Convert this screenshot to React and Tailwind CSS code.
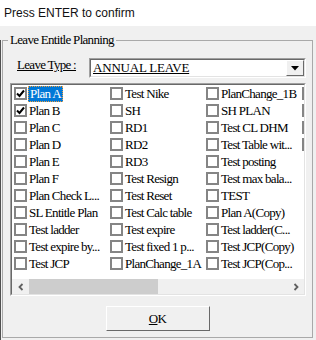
import React from "react";

const columns = [
  ["Plan A", "Plan B", "Plan C", "Plan D", "Plan E", "Plan F", "Plan Check L...", "SL Entitle Plan", "Test ladder", "Test expire by...", "Test JCP"],
  ["Test Nike", "SH", "RD1", "RD2", "RD3", "Test Resign", "Test Reset", "Test Calc table", "Test expire", "Test fixed 1 p...", "PlanChange_1A"],
  ["PlanChange_1B", "SH PLAN", "Test CL DHM", "Test Table wit...", "Test posting", "Test max bala...", "TEST", "Plan A(Copy)", "Test ladder(C...", "Test JCP(Copy)", "Test JCP(Cop..."],
  // fourth column only peeks in at the right edge
  ["", "", "", ""],
];

const checked = ["Plan A", "Plan B"];

function CheckBox({ on }) {
  return (
    <div className="w-[13px] h-[13px] shrink-0 border-2 border-[#858585] bg-white flex items-center justify-center">
      {on && (
        <svg width="9" height="9" viewBox="0 0 9 9">
          <path d="M1 4.5 L3.5 7 L8 1.5" fill="none" stroke="#000" strokeWidth="2" />
        </svg>
      )}
    </div>
  );
}

function Item({ label, col, row }) {
  const selected = col === 0 && row === 0;
  return (
    <div className="flex items-center h-[17px] w-[96px] gap-[2px]">
      <CheckBox on={checked.includes(label)} />
      {selected ? (
        <span className="h-[16px] leading-[14px] px-[1px] -ml-[1px] bg-[#0078d7] text-white border border-dotted border-[#f0a040] whitespace-nowrap">
          {label}
        </span>
      ) : (
        label && <span className="whitespace-nowrap leading-[16px]">{label}</span>
      )}
    </div>
  );
}

function Chevron({ dir }) {
  return (
    <svg width="8" height="8" viewBox="0 0 8 8">
      <path
        d={dir === "left" ? "M5.5 1 L2.5 4 L5.5 7" : "M2.5 1 L5.5 4 L2.5 7"}
        fill="none"
        stroke="#606060"
        strokeWidth="1.8"
      />
    </svg>
  );
}

export default function App() {
  return (
    <div className="w-[316px] h-[340px] overflow-hidden bg-[#f0f0f0] text-black font-['Liberation_Serif',serif] text-[13px] tracking-[-0.7px]">
      {/* title strip */}
      <div className="h-[26px] bg-white pl-[4px] flex items-center font-['Liberation_Sans',Arial,sans-serif] text-[12px] tracking-normal text-[#111]">
        Press ENTER to confirm
      </div>

      <div className="flex pt-[7px]">
        <div className="w-[2px] mt-[7px] h-[300px] border-l border-[#505050]" />

        <fieldset className="w-[311px] h-[305px] border border-[#a9a9a9] flex flex-col">
          <legend className="ml-[5px] px-[2px] leading-[14px]">Leave Entitle Planning</legend>

          {/* leave type row */}
          <div className="flex items-center mt-[11px]">
            <span className="ml-[14px] w-[72px] underline leading-[14px] -mt-[6px]">Leave Type :</span>
            <div className="w-[217px] h-[20px] border-t border-l border-[#a0a0a0] border-b-white border-r-white border-b border-r">
              <div className="h-full border-t border-l border-[#696969] border-b border-r border-b-[#e3e3e3] border-r-[#e3e3e3] bg-white flex items-center">
                <span className="flex-1 pl-[2px] underline tracking-[-0.2px] leading-[16px]">ANNUAL LEAVE</span>
                <div className="w-[18px] h-full bg-[#f0f0f0] border-t border-l border-white border-b border-r border-b-[#696969] border-r-[#696969] flex items-center justify-center">
                  <svg width="8" height="5" viewBox="0 0 8 5">
                    <path d="M0 0 L8 0 L4 4.5 Z" fill="#000" />
                  </svg>
                </div>
              </div>
            </div>
          </div>

          {/* list box */}
          <div className="ml-[7px] mt-[5px] w-[296px] h-[213px] border-t border-l border-[#a0a0a0] border-b border-r border-b-white border-r-white">
            <div className="h-full border-t border-l border-[#696969] border-b border-r border-b-[#e3e3e3] border-r-[#e3e3e3] bg-white flex flex-col">
              <div className="flex-1 overflow-hidden pl-[2px] grid grid-flow-col grid-rows-[repeat(11,17px)] auto-cols-[96px]">
                {columns.map((col, c) =>
                  col.map((label, r) => <Item key={c + "-" + r} label={label} col={c} row={r} />)
                )}
              </div>
              <div className="h-[15px] flex bg-[#f0f0f0]">
                <div className="w-[17px] flex items-center justify-center">
                  <Chevron dir="left" />
                </div>
                <div className="flex-1">
                  <div className="w-[129px] h-full bg-[#cdcdcd]" />
                </div>
                <div className="w-[17px] flex items-center justify-center">
                  <Chevron dir="right" />
                </div>
              </div>
            </div>
          </div>

          {/* ok button */}
          <div className="flex justify-center mt-[10px]">
            <button className="w-[104px] h-[25px] bg-[#f0f0f0] border-t border-l border-white border-b border-r border-b-[#696969] border-r-[#696969] flex items-center justify-center">
              <span className="leading-[14px]">
                <span className="underline">O</span>K
              </span>
            </button>
          </div>
        </fieldset>
      </div>
    </div>
  );
}
